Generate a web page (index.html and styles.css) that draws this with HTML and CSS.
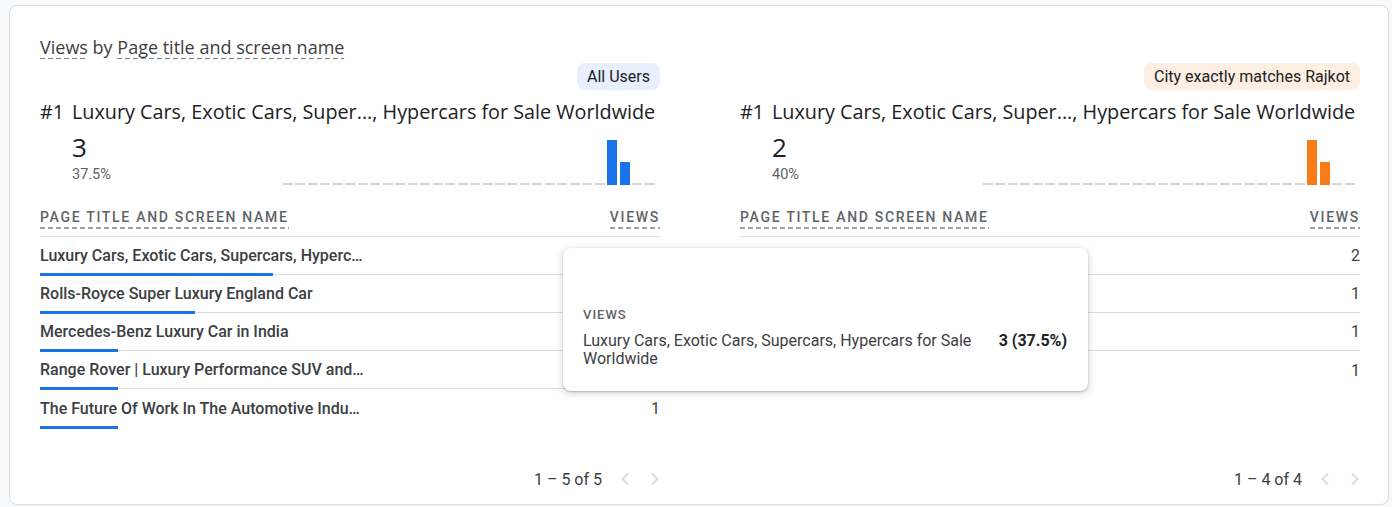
FILE: index.html
```html
<!DOCTYPE html>
<html>
<head>
<meta charset="utf-8">
<link rel="stylesheet" href="styles.css">
</head>
<body>
<div class="card">
  <h2 class="card-title"><span class="dash">Views</span> by <span class="dash">Page title and screen name</span></h2>
  <div class="panels">
    <section class="panel">
      <div class="badge-row"><span class="badge badge-blue">All Users</span></div>
      <div class="top-item"><span class="rank">#1</span><span class="top-name">Luxury Cars, Exotic Cars, Super..., Hypercars for Sale Worldwide</span></div>
      <div class="summary">
        <div class="kpi"><div class="kpi-value">3</div><div class="kpi-pct">37.5%</div></div>
        <div class="spark">
          <i class="d"></i><i class="d"></i><i class="d"></i><i class="d"></i><i class="d"></i><i class="d"></i><i class="d"></i><i class="d"></i><i class="d"></i><i class="d"></i>
          <i class="d"></i><i class="d"></i><i class="d"></i><i class="d"></i><i class="d"></i><i class="d"></i><i class="d"></i><i class="d"></i><i class="d"></i><i class="d"></i>
          <i class="d"></i><i class="d"></i><i class="d"></i><i class="d"></i><i class="d"></i><i class="d"></i>
          <i class="b blue" style="height:45px"></i><i class="b blue" style="height:23px"></i>
          <i class="d"></i><i class="d"></i>
        </div>
      </div>
      <div class="table">
        <div class="thead"><span class="th">Page title and screen name</span><span class="th">Views</span></div>
        <div class="tr"><span class="name">Luxury Cars, Exotic Cars, Supercars, Hyperc…</span><span class="val">3</span><i class="bar blue" style="width:37.5%"></i></div>
        <div class="tr"><span class="name">Rolls-Royce Super Luxury England Car</span><span class="val">2</span><i class="bar blue" style="width:25%"></i></div>
        <div class="tr"><span class="name">Mercedes-Benz Luxury Car in India</span><span class="val">1</span><i class="bar blue" style="width:12.5%"></i></div>
        <div class="tr"><span class="name">Range Rover | Luxury Performance SUV and…</span><span class="val">1</span><i class="bar blue" style="width:12.5%"></i></div>
        <div class="tr"><span class="name">The Future Of Work In The Automotive Indu…</span><span class="val">1</span><i class="bar blue" style="width:12.5%"></i></div>
      </div>
      <div class="pager">
        <span class="pager-text">1 – 5 of 5</span>
        <span class="chev"><svg width="10" height="14" viewBox="0 0 10 14"><polyline points="8,1.5 2.5,7 8,12.5"/></svg></span>
        <span class="chev"><svg width="10" height="14" viewBox="0 0 10 14"><polyline points="2,1.5 7.5,7 2,12.5"/></svg></span>
      </div>
    </section>

    <section class="panel">
      <div class="badge-row"><span class="badge badge-orange">City exactly matches Rajkot</span></div>
      <div class="top-item"><span class="rank">#1</span><span class="top-name">Luxury Cars, Exotic Cars, Super..., Hypercars for Sale Worldwide</span></div>
      <div class="summary">
        <div class="kpi"><div class="kpi-value">2</div><div class="kpi-pct">40%</div></div>
        <div class="spark">
          <i class="d"></i><i class="d"></i><i class="d"></i><i class="d"></i><i class="d"></i><i class="d"></i><i class="d"></i><i class="d"></i><i class="d"></i><i class="d"></i>
          <i class="d"></i><i class="d"></i><i class="d"></i><i class="d"></i><i class="d"></i><i class="d"></i><i class="d"></i><i class="d"></i><i class="d"></i><i class="d"></i>
          <i class="d"></i><i class="d"></i><i class="d"></i><i class="d"></i><i class="d"></i><i class="d"></i>
          <i class="b orange" style="height:45px"></i><i class="b orange" style="height:23px"></i>
          <i class="d"></i><i class="d"></i>
        </div>
      </div>
      <div class="table">
        <div class="thead"><span class="th">Page title and screen name</span><span class="th">Views</span></div>
        <div class="tr"><span class="name">Luxury Cars, Exotic Cars, Supercars, Hyperc…</span><span class="val">2</span><i class="bar orange" style="width:40%"></i></div>
        <div class="tr"><span class="name">Rolls-Royce Super Luxury England Car</span><span class="val">1</span><i class="bar orange" style="width:20%"></i></div>
        <div class="tr"><span class="name">Mercedes-Benz Luxury Car in India</span><span class="val">1</span><i class="bar orange" style="width:20%"></i></div>
        <div class="tr"><span class="name">Range Rover | Luxury Performance SUV and…</span><span class="val">1</span><i class="bar orange" style="width:20%"></i></div>
      </div>
      <div class="pager">
        <span class="pager-text">1 – 4 of 4</span>
        <span class="chev"><svg width="10" height="14" viewBox="0 0 10 14"><polyline points="8,1.5 2.5,7 8,12.5"/></svg></span>
        <span class="chev"><svg width="10" height="14" viewBox="0 0 10 14"><polyline points="2,1.5 7.5,7 2,12.5"/></svg></span>
      </div>
    </section>
  </div>

  <div class="tooltip">
    <div class="tt-head"></div>
    <div class="tt-label">Views</div>
    <div class="tt-row">
      <span class="tt-name">Luxury Cars, Exotic Cars, Supercars, Hypercars for Sale Worldwide</span>
      <span class="tt-val">3 (37.5%)</span>
    </div>
  </div>
</div>
</body>
</html>
```

FILE: styles.css
```css
html, body {
  margin: 0;
  padding: 0;
}
body {
  background: #f8f9fa;
  padding: 5px 3px 0 9px;
  font-family: Roboto, "Liberation Sans", sans-serif;
  color: #3c4043;
}
.card {
  position: relative;
  display: flex;
  flex-direction: column;
  height: 500px;
  box-sizing: border-box;
  background: #fff;
  border: 1px solid #dadce0;
  border-radius: 8px;
  padding: 30px 28px 7px 30px;
}
.card-title {
  margin: 0;
  font-family: "Open Sans", Roboto, sans-serif;
  font-weight: 400;
  font-size: 18px;
  line-height: 22px;
  color: #3c4043;
}
.dash {
  display: inline-block;
  padding-bottom: 1px;
  background-image: linear-gradient(to right, #80868b 5px, transparent 5px);
  background-size: 8px 1px;
  background-repeat: repeat-x;
  background-position: left bottom;
}
.panels {
  flex: 1;
  display: grid;
  grid-template-columns: 1fr 1fr;
  column-gap: 80px;
}
.panel {
  display: flex;
  flex-direction: column;
}
.badge-row {
  display: flex;
  justify-content: flex-end;
  margin-top: 4px;
}
.badge {
  display: inline-block;
  height: 27px;
  line-height: 27px;
  padding: 0 10px;
  border-radius: 8px;
  font-size: 16px;
  color: #202124;
}
.badge-blue { background: #e8f0fe; }
.badge-orange { background: #feefe3; }

.top-item {
  display: flex;
  margin-top: 10px;
  font-family: "Open Sans", Roboto, sans-serif;
  font-size: 19.8px;
  line-height: 24px;
  color: #202124;
  white-space: nowrap;
}
.rank {
  width: 32px;
  flex: none;
}
.summary {
  display: flex;
  align-items: flex-end;
  height: 54px;
  margin-top: 7px;
}
.kpi {
  align-self: flex-start;
  padding-left: 32px;
}
.kpi-value {
  font-family: "Open Sans", Roboto, sans-serif;
  font-size: 26px;
  line-height: 32px;
  color: #202124;
}
.kpi-pct {
  margin-top: 3px;
  font-size: 14.5px;
  line-height: 18px;
  color: #5f6368;
}
.spark {
  margin-left: auto;
  margin-right: 5px;
  width: 372px;
  height: 45px;
  display: flex;
  justify-content: space-between;
  align-items: flex-end;
}
.spark i {
  display: block;
  width: 10px;
}
.spark .d {
  height: 2px;
  background: #d3d5d8;
}
.blue { background: #1a73e8; }
.orange { background: #fa7b17; }

.table {
  margin-top: 15px;
}
.thead {
  display: flex;
  justify-content: space-between;
  align-items: center;
  height: 37px;
  box-sizing: border-box;
  border-bottom: 1px solid #dadce0;
}
.th {
  font-size: 14px;
  font-weight: 500;
  letter-spacing: 1.7px;
  text-transform: uppercase;
  color: #5f6368;
  line-height: 18px;
  padding-bottom: 3px;
  background-image: linear-gradient(to right, #9aa0a6 5px, transparent 5px);
  background-size: 8px 2px;
  background-repeat: repeat-x;
  background-position: left bottom;
}
.tr {
  display: grid;
  grid-template-columns: 1fr auto;
  grid-template-rows: 1fr 0;
  align-items: center;
  height: 38px;
  box-sizing: border-box;
  border-bottom: 1px solid #dadce0;
  font-size: 16px;
}
.tr:last-child { border-bottom: none; }
.name {
  font-weight: 500;
  color: #3c4043;
  white-space: nowrap;
}
.val {
  color: #3c4043;
}
.bar {
  display: block;
  grid-column: 1 / -1;
  align-self: start;
  height: 3px;
  margin-top: -1px;
}
.pager {
  margin-top: auto;
  height: 36px;
  display: flex;
  justify-content: flex-end;
  align-items: center;
  gap: 20px;
  font-size: 16px;
}
.pager-text {
  margin-right: -2px;
  color: #3c4043;
}
.chev {
  display: flex;
}
.chev svg polyline {
  fill: none;
  stroke: #dadce0;
  stroke-width: 2;
}

.tooltip {
  position: absolute;
  left: 553px;
  top: 242px;
  width: 525px;
  box-sizing: border-box;
  padding: 20px 21px 23px 20px;
  background: #fff;
  border-radius: 8px;
  box-shadow: 0 1px 2px rgba(60,64,67,.3), 0 2px 6px 2px rgba(60,64,67,.15);
}
.tt-head { height: 39px; }
.tt-label {
  font-size: 13px;
  font-weight: 500;
  letter-spacing: 1px;
  text-transform: uppercase;
  color: #5f6368;
  line-height: 16px;
}
.tt-row {
  margin-top: 9px;
  display: grid;
  grid-template-columns: 1fr auto;
  column-gap: 20px;
  font-size: 16px;
  line-height: 18px;
}
.tt-name { color: #3c4043; }
.tt-val { font-weight: 700; color: #202124; }
```
